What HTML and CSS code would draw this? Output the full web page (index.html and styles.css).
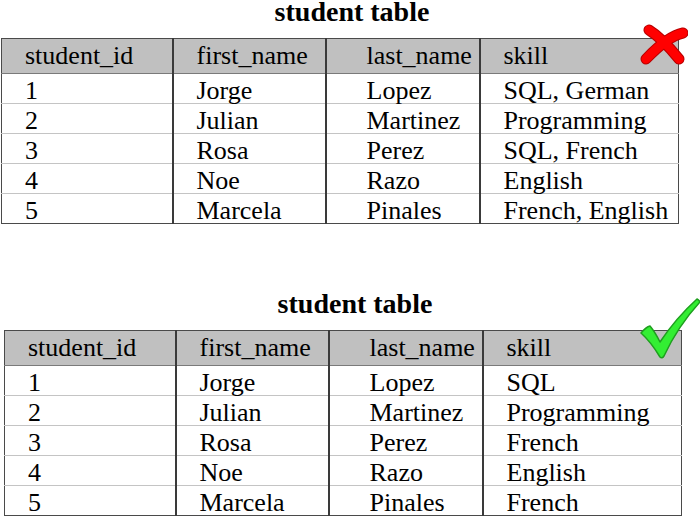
FILE: index.html
```html
<!DOCTYPE html>
<html>
<head>
<meta charset="utf-8">
<link rel="stylesheet" href="styles.css">
</head>
<body>
<div class="page">
  <section class="block block-bad">
    <h2 class="title">student table</h2>
    <table class="grid">
      <colgroup><col class="c1"><col class="c2"><col class="c3"><col class="c4"></colgroup>
      <thead>
        <tr><th>student_id</th><th>first_name</th><th class="p3">last_name</th><th>skill</th></tr>
      </thead>
      <tbody>
        <tr><td>1</td><td>Jorge</td><td class="p3">Lopez</td><td>SQL, German</td></tr>
        <tr><td>2</td><td>Julian</td><td class="p3">Martinez</td><td>Programming</td></tr>
        <tr><td>3</td><td>Rosa</td><td class="p3">Perez</td><td>SQL, French</td></tr>
        <tr><td>4</td><td>Noe</td><td class="p3">Razo</td><td>English</td></tr>
        <tr><td>5</td><td>Marcela</td><td class="p3">Pinales</td><td>French, English</td></tr>
      </tbody>
    </table>
    <svg class="mark mark-x" width="48" height="42" viewBox="0 0 48 42">
      <path d="M9,6 Q22,14 39,35" fill="none" stroke="#b80000" stroke-width="11" stroke-linecap="round"/>
      <path d="M43,9 Q28,12 6,35" fill="none" stroke="#b80000" stroke-width="11" stroke-linecap="round"/>
      <path d="M9,6 Q22,14 39,35" fill="none" stroke="#ff0000" stroke-width="9" stroke-linecap="round"/>
      <path d="M43,9 Q28,12 6,35" fill="none" stroke="#ff0000" stroke-width="9" stroke-linecap="round"/>
    </svg>
  </section>

  <section class="block block-good">
    <h2 class="title">student table</h2>
    <table class="grid">
      <colgroup><col class="c1"><col class="c2"><col class="c3"><col class="c4"></colgroup>
      <thead>
        <tr><th>student_id</th><th>first_name</th><th class="p3">last_name</th><th>skill</th></tr>
      </thead>
      <tbody>
        <tr><td>1</td><td>Jorge</td><td class="p3">Lopez</td><td>SQL</td></tr>
        <tr><td>2</td><td>Julian</td><td class="p3">Martinez</td><td>Programming</td></tr>
        <tr><td>3</td><td>Rosa</td><td class="p3">Perez</td><td>French</td></tr>
        <tr><td>4</td><td>Noe</td><td class="p3">Razo</td><td>English</td></tr>
        <tr><td>5</td><td>Marcela</td><td class="p3">Pinales</td><td>French</td></tr>
      </tbody>
    </table>
    <svg class="mark mark-check" width="62" height="64" viewBox="0 0 62 64">
      <path d="M3,37 Q8,31 12,30 Q17,36 22,46 Q38,22 59,3 Q61,4 62,6 Q40,30 26,60 Q24,63 22,61 Q13,46 3,37 Z" fill="#33ee33" stroke="#1f9f1f" stroke-width="1.5" stroke-linejoin="round"/>
    </svg>
  </section>
</div>
</body>
</html>
```

FILE: styles.css
```css
html, body {
  margin: 0;
  padding: 0;
  background: #ffffff;
}

.page {
  width: 700px;
  font-family: "Liberation Serif", "Times New Roman", serif;
  color: #000;
}

.block {
  position: relative;
  width: 677px;
}

.block-bad {
  margin-left: 1px;
}

.block-good {
  margin-left: 4px;
  margin-top: 68px;
}

.title {
  margin: 0 0 14px 0;
  padding-left: 25px;
  font-family: "Liberation Serif", "Times New Roman", serif;
  font-size: 28px;
  line-height: 24px;
  font-weight: bold;
  text-align: center;
}

.grid {
  width: 677px;
  table-layout: fixed;
  border-collapse: collapse;
  border: 1px solid #4a4a4a;
  font-family: "Liberation Serif", "Times New Roman", serif;
  font-size: 26px;
}

.c1 { width: 171px; }
.c2 { width: 153px; }
.c3 { width: 154px; }
.c4 { width: 199px; }

.grid th,
.grid td {
  padding: 0 0 0 23px;
  text-align: left;
  font-weight: normal;
  white-space: nowrap;
  border-left: 2px solid #3a3a3a;
}

.grid th:first-child,
.grid td:first-child {
  border-left: none;
}

.grid th {
  height: 34px;
  line-height: 26px;
  background: #c0c0c0;
  border-bottom: 1px solid #7a7a7a;
}

.grid td {
  height: 24px;
  line-height: 24px;
  padding-top: 5px;
  border-top: 1px solid #c4c4c4;
}

.grid .p3 {
  padding-left: 40px;
}

.mark {
  position: absolute;
}

.mark-x {
  left: 639px;
  top: 24px;
}

.mark-check {
  left: 634px;
  top: 4px;
}
```
